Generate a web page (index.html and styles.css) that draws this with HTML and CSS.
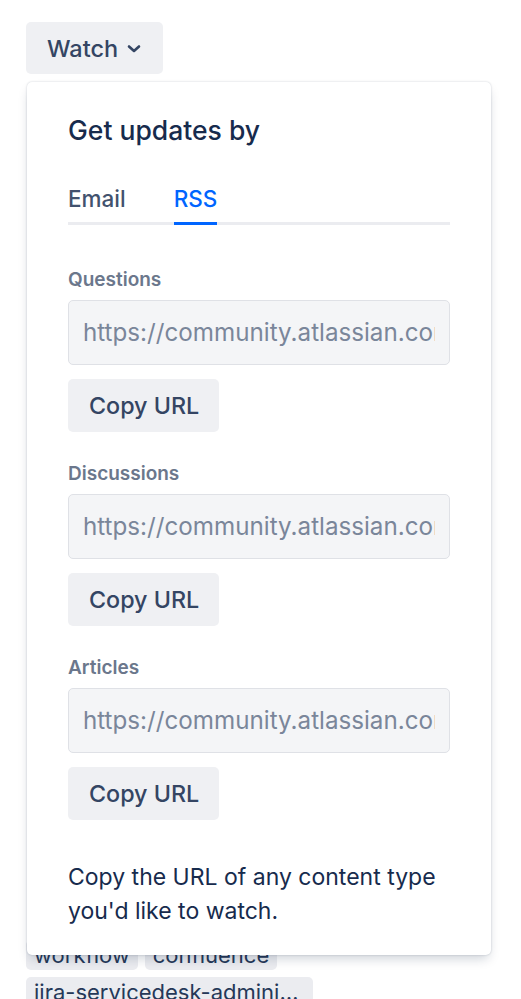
FILE: index.html
```html
<!DOCTYPE html>
<html>
<head>
<meta charset="utf-8">
<link rel="stylesheet" href="styles.css">
</head>
<body>
<div class="page">
  <div class="watch-wrap">
    <button class="watch-btn">Watch
      <svg class="chev" width="14" height="10" viewBox="0 0 14 10"><path d="M2 2.5 L7 7 L12 2.5" fill="none" stroke="#344563" stroke-width="2.6" stroke-linecap="round" stroke-linejoin="round"/></svg>
    </button>
    <div class="popup">
      <h2 class="title">Get updates by</h2>
      <div class="tabs">
        <span class="tab">Email</span>
        <span class="tab active">RSS</span>
      </div>
      <div class="feeds">
        <div class="feed">
          <div class="label">Questions</div>
          <input class="url-field" readonly value="https://community.atlassian.com/t5/forums/rss">
          <button class="copy-btn">Copy URL</button>
        </div>
        <div class="feed">
          <div class="label">Discussions</div>
          <input class="url-field" readonly value="https://community.atlassian.com/t5/forums/rss">
          <button class="copy-btn">Copy URL</button>
        </div>
        <div class="feed">
          <div class="label">Articles</div>
          <input class="url-field" readonly value="https://community.atlassian.com/t5/forums/rss">
          <button class="copy-btn">Copy URL</button>
        </div>
      </div>
      <p class="note">Copy the URL of any content type you'd like to watch.</p>
    </div>
  </div>
  <div class="tags">
    <span class="tag">workflow</span>
    <span class="tag">confluence</span>
    <span class="tag long">jira-servicedesk-administration</span>
  </div>
</div>
</body>
</html>
```

FILE: styles.css
```css
* { box-sizing: border-box; }
html, body { margin: 0; padding: 0; background: #fff; }
body {
  font-family: Inter, "Noto Sans", "Liberation Sans", sans-serif;
  color: #172b4d;
  overflow: hidden;
  height: 999px;
}
.page {
  padding: 22px 0 0 26px;
}
.watch-wrap {
  position: relative;
}
.watch-btn {
  display: flex;
  align-items: center;
  gap: 9px;
  height: 52px;
  padding: 0 22px 0 21px;
  border: none;
  border-radius: 5px;
  background: #eff0f3;
  font-family: inherit;
  font-size: 23.5px;
  font-weight: 500;
  color: #344563;
}
.chev { margin-top: 2px; }
.popup {
  position: absolute;
  left: 1px;
  top: 60px;
  width: 464px;
  background: #fff;
  border-radius: 5px;
  box-shadow: 0 6px 12px -3px rgba(9, 30, 66, 0.22), 0 0 2px rgba(9, 30, 66, 0.22);
  padding: 32px 41px 27px 41px;
  z-index: 2;
}
.title {
  margin: 0;
  font-size: 26.5px;
  line-height: 32px;
  font-weight: 500;
  color: #172b4d;
}
.tabs {
  display: flex;
  gap: 48px;
  margin-top: 40px;
  border-bottom: 3px solid #ebecf0;
}
.tab {
  font-size: 22.5px;
  line-height: 26px;
  font-weight: 500;
  color: #42526e;
  padding-bottom: 10px;
  margin-bottom: -3px;
  border-bottom: 3px solid transparent;
}
.tab.active {
  color: #0065ff;
  border-bottom-color: #0065ff;
}
.feeds {
  display: flex;
  flex-direction: column;
  gap: 30px;
  margin-top: 43px;
}
.feed {
  display: flex;
  flex-direction: column;
  align-items: flex-start;
}
.label {
  font-size: 19px;
  line-height: 23px;
  font-weight: 600;
  color: #6b778c;
}
.url-field {
  margin-top: 9px;
  width: 100%;
  height: 65px;
  background: #f4f5f7;
  border: 1.5px solid #dfe1e6;
  border-radius: 5px;
  padding: 0 14px;
  font-family: inherit;
  font-size: 24.2px;
  color: #7a869a;
  outline: none;
}
.copy-btn {
  margin-top: 14px;
  height: 53px;
  padding: 0 20px 0 21px;
  border: none;
  border-radius: 5px;
  background: #eff0f3;
  font-family: inherit;
  font-size: 23.3px;
  font-weight: 500;
  color: #344563;
}
.note {
  margin: 40px 0 0 0;
  font-size: 23px;
  line-height: 34px;
  color: #172b4d;
}
.tags {
  margin-top: 866px;
  display: flex;
  flex-wrap: wrap;
  gap: 7px;
  width: 300px;
}
.tag {
  display: inline-block;
  height: 30px;
  line-height: 30px;
  padding: 0 8px;
  background: #ebecf0;
  border-radius: 5px;
  font-size: 22px;
  color: #253858;
  white-space: nowrap;
  overflow: hidden;
  text-overflow: ellipsis;
}
.tag.long { max-width: 287px; }
```
